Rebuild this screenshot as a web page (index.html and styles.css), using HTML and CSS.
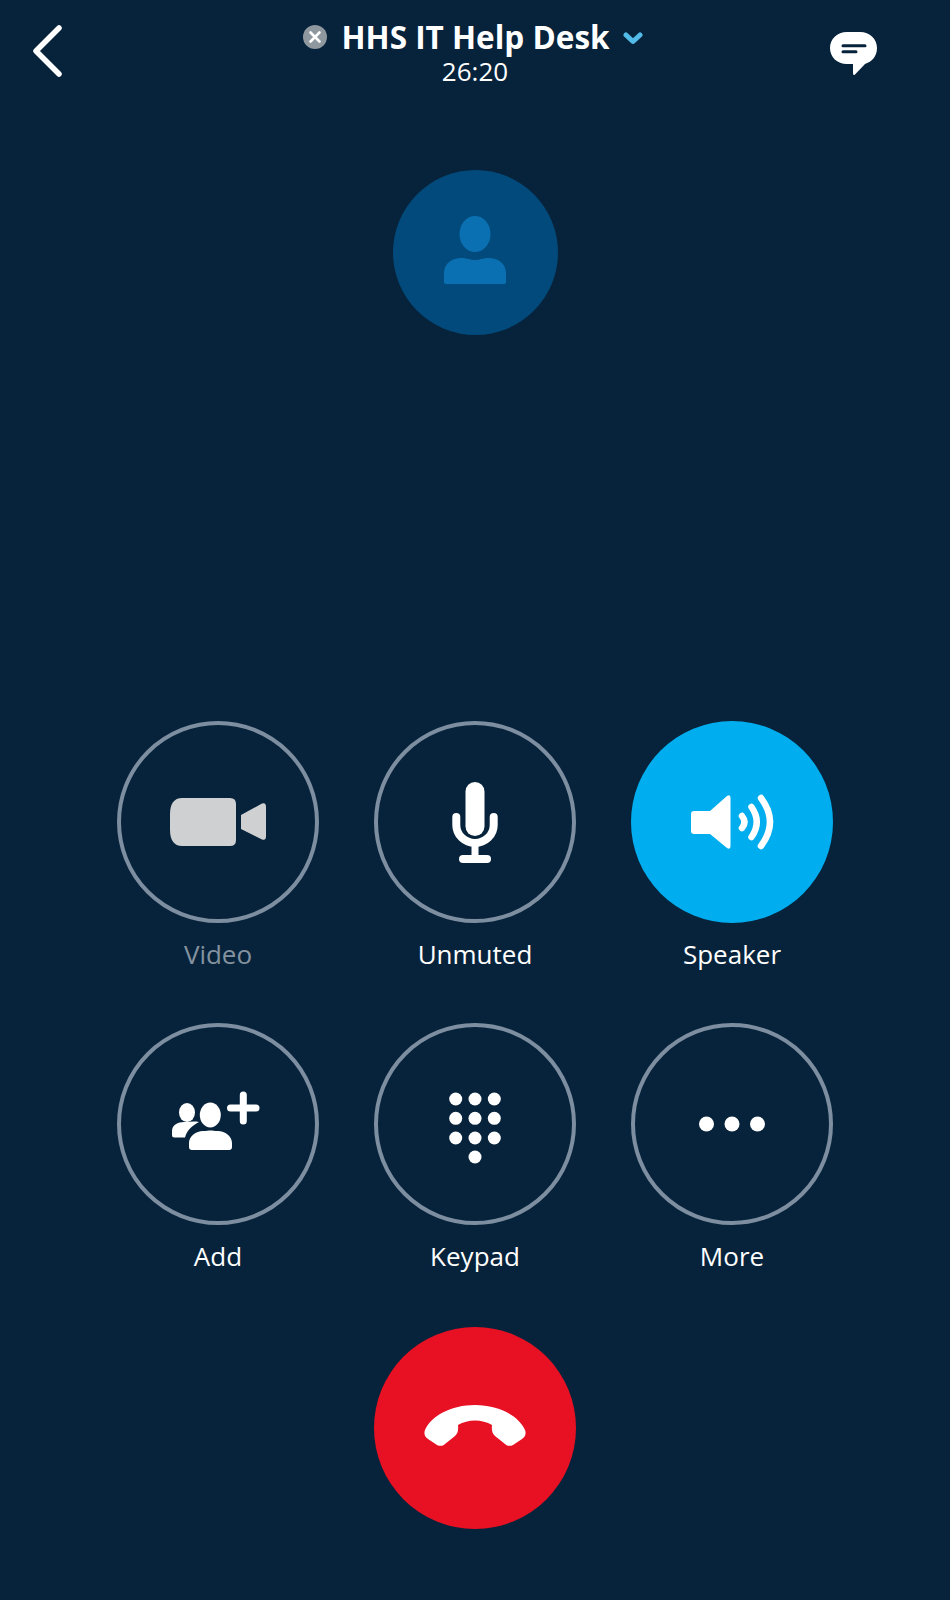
FILE: index.html
```html
<!DOCTYPE html>
<html lang="en">
<head>
<meta charset="utf-8">
<title>Call</title>
<link rel="stylesheet" href="styles.css">
</head>
<body>
<main class="screen">
  <header class="topbar">
    <button class="nav-btn back" aria-label="Back">
      <svg width="30" height="52" viewBox="0 0 30 52"><path class="stroke-white chevron" d="M27 3 L4 26 L27 49"/></svg>
    </button>
    <div class="title-block">
      <div class="title-row">
        <svg class="status" width="24" height="24" viewBox="0 0 24 24"><circle cx="12" cy="12" r="12" fill="#8f979f"/><path d="M7.500 7.500 L16.500 16.500 M16.500 7.500 L7.500 16.500" stroke="#fff" stroke-width="2.600" stroke-linecap="round"/></svg>
        <span class="title">HHS IT Help Desk</span>
        <svg class="caret" width="20" height="13" viewBox="0 0 20 13"><path d="M3 3 L10 9.500 L17 3" fill="none" stroke="#52bbe8" stroke-width="5" stroke-linecap="round" stroke-linejoin="round"/></svg>
      </div>
      <div class="timer">26:20</div>
    </div>
    <button class="nav-btn chat" aria-label="Chat">
      <svg width="47" height="45" viewBox="0 0 47 45"><path d="M17 1 H30 C40 1 47 8 47 17 C47 26 41 31 35 33 L25 43.500 Q23 45 23 42 V33 H17 C7 33 0 26 0 17 C0 8 7 1 17 1 Z" fill="#fff"/><path d="M13 14.700 H35 M13 20.700 H26" stroke="#07233b" stroke-width="3" stroke-linecap="round"/></svg>
    </button>
  </header>

  <div class="avatar">
    <svg width="80" height="80" viewBox="-40 -40 80 80"><ellipse cx="0" cy="-19" rx="15.500" ry="18" fill="#0b70b2"/><path d="M-31 29 V20 C-31 10 -22 5 -14 5 C-8 5 -5 7 0 7 C5 7 8 5 14 5 C22 5 31 10 31 20 V29 Q31 31 29 31 H-29 Q-31 31 -31 29 Z" fill="#0b70b2"/></svg>
  </div>

  <section class="controls">
    <div class="control disabled">
      <div class="ring">
        <svg class="icon" viewBox="-60 -60 120 120"><path d="M-36 -24 H12 Q18 -24 18 -18 V18 Q18 24 12 24 H-36 C-44 24 -48 18 -48 8 V-8 C-48 -18 -44 -24 -36 -24 Z" fill="#cfd0d2"/><path d="M23 -7 L44 -18.500 Q48 -20 48 -15 V14 Q48 19 44 17.500 L23 7 Z" fill="#cfd0d2"/></svg>
      </div>
      <span class="label">Video</span>
    </div>
    <div class="control">
      <div class="ring">
        <svg class="icon" viewBox="-60 -60 120 120"><rect x="-9.500" y="-40" width="19" height="54" rx="9.500" fill="#fff"/><path class="stroke-white mic" d="M-18.700 -5 V3 A18.700 18 0 0 0 18.700 3 V-5"/><path class="stroke-white mic-stem" d="M0 21 V36"/><rect x="-16" y="33" width="32" height="8" rx="4" fill="#fff"/></svg>
      </div>
      <span class="label">Unmuted</span>
    </div>
    <div class="control">
      <div class="ring active">
        <svg class="icon" viewBox="-60 -60 120 120"><path d="M-41 -8 Q-41 -11 -38 -11 H-22 L-5 -26 Q-1.500 -28 -1.500 -24 V24 Q-1.500 28 -5 26 L-22 12 H-38 Q-41 12 -41 9 Z" fill="#fff"/><path class="stroke-white wave" d="M10 -6 Q15 0 10 6 M19.500 -15 Q30 0 19.500 15 M29 -24 Q47 0 29 24"/></svg>
      </div>
      <span class="label">Speaker</span>
    </div>
    <div class="control">
      <div class="ring">
        <svg class="icon" viewBox="-60 -60 120 120"><ellipse cx="-31" cy="-11.500" rx="8" ry="9.500" fill="#fff"/><path d="M-46 11 V7 C-46 1 -40 -2 -34 -2 C-29 -2 -24 -3 -19 -2 C-25 1 -31 6 -33 13.500 H-43.500 Q-46 13.500 -46 11 Z" fill="#fff"/><ellipse cx="-7.700" cy="-9" rx="10.500" ry="12.500" fill="#fff"/><path d="M-29 23 V19 C-29 12 -22 7 -15 7 C-11 7 -10 6.500 -7.500 6.500 C-5 6.500 -4 7 0 7 C7 7 14 12 14 19 V23 Q14 26 11 26 H-26 Q-29 26 -29 23 Z" fill="#fff"/><path class="stroke-white plus" d="M25.300 -29 V-3 M12.500 -16 H38"/></svg>
      </div>
      <span class="label">Add</span>
    </div>
    <div class="control">
      <div class="ring">
        <svg class="icon" viewBox="-60 -60 120 120" fill="#fff"><circle cx="-19.300" cy="-25" r="6.500"/><circle cx="0" cy="-25" r="6.500"/><circle cx="19.300" cy="-25" r="6.500"/><circle cx="-19.300" cy="-5.700" r="6.500"/><circle cx="0" cy="-5.700" r="6.500"/><circle cx="19.300" cy="-5.700" r="6.500"/><circle cx="-19.300" cy="14" r="6.500"/><circle cx="0" cy="14" r="6.500"/><circle cx="19.300" cy="14" r="6.500"/><circle cx="0" cy="33" r="6.500"/></svg>
      </div>
      <span class="label">Keypad</span>
    </div>
    <div class="control">
      <div class="ring">
        <svg class="icon" viewBox="-60 -60 120 120" fill="#fff"><circle cx="-25.500" cy="0" r="7.500"/><circle cx="0" cy="0" r="7.500"/><circle cx="25.500" cy="0" r="7.500"/></svg>
      </div>
      <span class="label">More</span>
    </div>
  </section>

  <button class="hangup" aria-label="End call">
    <svg width="120" height="120" viewBox="-60 -60 120 120"><path d="M-50 2 C-44 -12 -24 -23 0 -23 C24 -23 44 -12 50 2 C51.500 6 50 9 47 11 L38 17 C35 18.500 32 18 30 16 L20 8 C17 5 16.500 2 17 -3 C12 -6 6 -7.500 0 -7.500 C-6 -7.500 -12 -6 -17 -3 C-16.500 2 -17 5 -20 8 L-30 16 C-32 18 -35 18.500 -38 17 L-47 11 C-50 9 -51.500 6 -50 2 Z" fill="#fff"/></svg>
  </button>
</main>
</body>
</html>
```

FILE: styles.css
```css
* { box-sizing: border-box; }

html, body {
  margin: 0;
  background: #07233b;
}

.screen {
  width: 950px;
  height: 1600px;
  display: flex;
  flex-direction: column;
  align-items: center;
  background: #07233b;
  color: #fff;
  font-family: "Open Sans", "Noto Sans", sans-serif;
  overflow: hidden;
}

button {
  border: 0;
  padding: 0;
  background: none;
  cursor: pointer;
}

.stroke-white {
  fill: none;
  stroke: #fff;
  stroke-linecap: round;
  stroke-linejoin: round;
}

.chevron { stroke-width: 5.5; }
.mic { stroke-width: 8; }
.mic-stem { stroke-width: 7; }
.wave { stroke-width: 6.5; }
.plus { stroke-width: 7; }

/* Header */
.topbar {
  width: 100%;
  height: 170px;
  display: grid;
  grid-template-columns: 1fr auto 1fr;
  align-items: start;
  padding: 0 32px;
}

.nav-btn { display: flex; }
.back { justify-self: start; margin-top: 25px; }
.chat { justify-self: end; margin-top: 31px; margin-right: 41px; }

.title-block {
  display: flex;
  flex-direction: column;
  align-items: center;
  padding-top: 20px;
}

.title-row {
  display: flex;
  align-items: center;
  height: 34px;
  padding-right: 4px;
}

.status { margin-right: 14px; }

.title {
  font-size: 31.5px;
  font-weight: 700;
  line-height: 34px;
  white-space: nowrap;
}

.caret { margin-left: 13px; margin-top: 3px; }

.timer {
  font-size: 26px;
  line-height: 34px;
}

/* Avatar */
.avatar {
  width: 165px;
  height: 165px;
  border-radius: 50%;
  background: #024a7b;
  display: flex;
  align-items: center;
  justify-content: center;
  flex: none;
}

/* Control grid */
.controls {
  margin-top: 386px;
  display: grid;
  grid-template-columns: repeat(3, 202px);
  column-gap: 55px;
  row-gap: 49px;
}

.control {
  display: flex;
  flex-direction: column;
  align-items: center;
}

.ring {
  width: 202px;
  height: 202px;
  border-radius: 50%;
  border: 4.5px solid #7d8ea0;
  display: flex;
  align-items: center;
  justify-content: center;
}

.ring.active {
  border: 0;
  background: #00aeef;
}

.icon {
  width: 120px;
  height: 120px;
  flex: none;
}

.label {
  margin-top: 11px;
  font-size: 26px;
  line-height: 40px;
}

.disabled .label { color: #84929f; }

/* End call */
.hangup {
  margin-top: 51px;
  width: 202px;
  height: 202px;
  flex: none;
  border-radius: 50%;
  background: #e81123;
  display: flex;
  align-items: center;
  justify-content: center;
}
```
